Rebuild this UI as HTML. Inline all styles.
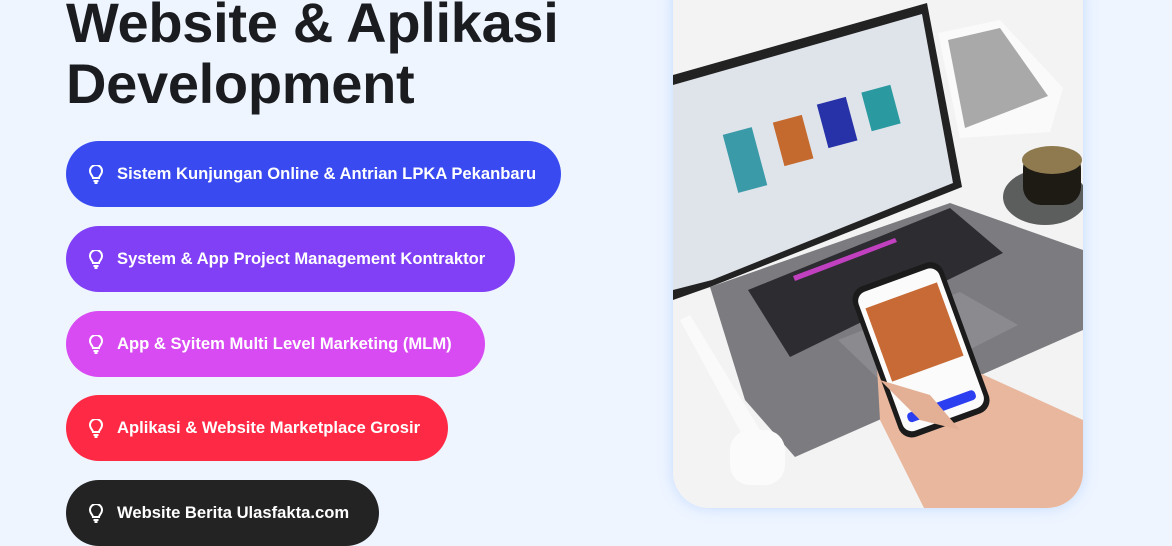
<!DOCTYPE html>
<html><head><meta charset="utf-8"><style>
body{margin:0;width:1172px;height:527px;background:#eef5ff;overflow:hidden;position:relative;font-family:"Liberation Sans",sans-serif}
h1{position:absolute;left:66px;top:-8px;margin:0;font-size:56px;line-height:61px;font-weight:bold;color:#1b1c20;letter-spacing:-0.3px}
.b{position:absolute;left:66px;height:66px;border-radius:33px;color:#fff;font-weight:bold;font-size:16.6px;line-height:66px;box-sizing:border-box;padding-left:51px;white-space:nowrap}
.b svg{position:absolute;left:22px;top:24px}
.card{position:absolute;left:673px;top:-40px;width:410px;height:548px;border-radius:36px;overflow:hidden;background:#f4f4f4;box-shadow:0 0 14px rgba(120,170,255,.35)}
</style></head><body>
<h1>Website &amp; Aplikasi<br>Development</h1>
<div class="b" style="top:141px;width:495px;background:#394bf0"><svg width="16" height="19" viewBox="0 0 16 19" fill="none" stroke="#fff" stroke-width="2"><path d="M5 13c0-2-3-3.5-3-7a6 6 0 0 1 12 0c0 3.5-3 5-3 7z"/><path d="M5.5 16h5M6.5 18h3"/></svg>Sistem Kunjungan Online &amp; Antrian LPKA Pekanbaru</div>
<div class="b" style="top:226px;width:449px;background:#8140f6"><svg width="16" height="19" viewBox="0 0 16 19" fill="none" stroke="#fff" stroke-width="2"><path d="M5 13c0-2-3-3.5-3-7a6 6 0 0 1 12 0c0 3.5-3 5-3 7z"/><path d="M5.5 16h5M6.5 18h3"/></svg>System &amp; App Project Management Kontraktor</div>
<div class="b" style="top:311px;width:419px;background:#d84bf2"><svg width="16" height="19" viewBox="0 0 16 19" fill="none" stroke="#fff" stroke-width="2"><path d="M5 13c0-2-3-3.5-3-7a6 6 0 0 1 12 0c0 3.5-3 5-3 7z"/><path d="M5.5 16h5M6.5 18h3"/></svg>App &amp; Syitem Multi Level Marketing (MLM)</div>
<div class="b" style="top:395px;width:382px;background:#fe2a45"><svg width="16" height="19" viewBox="0 0 16 19" fill="none" stroke="#fff" stroke-width="2"><path d="M5 13c0-2-3-3.5-3-7a6 6 0 0 1 12 0c0 3.5-3 5-3 7z"/><path d="M5.5 16h5M6.5 18h3"/></svg>Aplikasi &amp; Website Marketplace Grosir</div>
<div class="b" style="top:480px;width:313px;background:#232323"><svg width="16" height="19" viewBox="0 0 16 19" fill="none" stroke="#fff" stroke-width="2"><path d="M5 13c0-2-3-3.5-3-7a6 6 0 0 1 12 0c0 3.5-3 5-3 7z"/><path d="M5.5 16h5M6.5 18h3"/></svg>Website Berita Ulasfakta.com</div>
<div class="card"><svg width="410" height="548" viewBox="673 -40 410 548">
<rect x="673" y="-40" width="410" height="548" fill="#f3f3f3"/>
<polygon points="938,33 1000,20 1063,88 1050,132 960,138" fill="#fafafa"/>
<polygon points="948,40 1000,28 1048,96 965,128" fill="#a9a9a9"/>
<ellipse cx="1045" cy="197" rx="42" ry="28" fill="#5b5e5d"/>
<rect x="1023" y="150" width="58" height="55" rx="18" fill="#1e1a14"/>
<ellipse cx="1052" cy="160" rx="30" ry="14" fill="#8e7a4e"/>
<polygon points="673,75 927,3 962,187 710,287 673,300" fill="#222"/>
<polygon points="673,85 922,14 953,183 712,280 673,290" fill="#dfe3ea"/>
<rect x="730" y="130" width="30" height="60" fill="#3a9aa8" transform="rotate(-15 745 160)"/>
<rect x="778" y="118" width="30" height="45" fill="#c56a2e" transform="rotate(-15 793 140)"/>
<rect x="822" y="100" width="30" height="45" fill="#2732a8" transform="rotate(-15 837 122)"/>
<rect x="866" y="88" width="30" height="40" fill="#2a9aa0" transform="rotate(-15 881 108)"/>
<polygon points="710,287 950,203 1083,250 1083,330 795,457 745,400" fill="#7c7b80"/>
<polygon points="748,290 950,208 1003,253 790,357" fill="#2d2c30"/>
<polygon points="793,276 895,238 897,242 795,281" fill="#c040c0"/>
<polygon points="838,340 960,292 1018,325 890,390" fill="#8b8a8f"/>
<polygon points="680,320 690,315 760,430 745,440" fill="#fafafa"/>
<rect x="730" y="430" width="55" height="55" rx="20" fill="#fbfbfb"/>
<polygon points="877,367 940,355 1083,420 1083,520 930,520 880,420" fill="#e8b79e"/>
<g transform="rotate(-20 920 347)"><rect x="872" y="270" width="96" height="160" rx="14" fill="#1b1b1b"/><rect x="877" y="276" width="86" height="148" rx="10" fill="#fbfbfb"/><rect x="882" y="292" width="76" height="78" fill="#c86a35"/><rect x="884" y="405" width="72" height="10" rx="4" fill="#2c3ff0"/></g>
<polygon points="880,380 930,395 960,430 920,420" fill="#e4b095"/>
</svg></div>
</body></html>
